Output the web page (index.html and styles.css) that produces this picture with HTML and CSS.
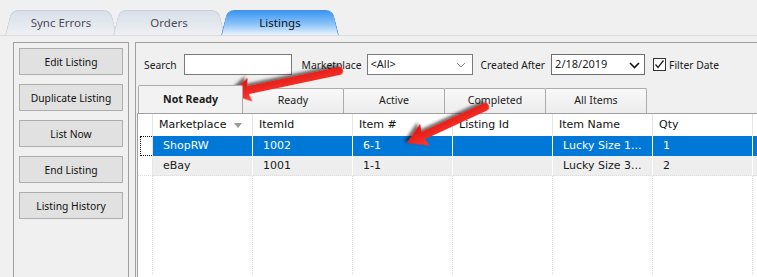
FILE: index.html
```html
<!DOCTYPE html>
<html lang="en">
<head>
    <meta charset="UTF-8">
    <title>Listings</title>
    <link rel="stylesheet" href="styles.css">
</head>
<body>
    <!-- Top tabs -->
    <div class="top-tabs">
        <div class="ttab">Sync Errors</div>
        <div class="ttab">Orders</div>
        <div class="ttab active">Listings</div>
    </div>

    <div class="content">
        <!-- Left actions -->
        <div class="side">
            <button class="btn">Edit Listing</button>
            <button class="btn">Duplicate Listing</button>
            <button class="btn">List Now</button>
            <button class="btn">End Listing</button>
            <button class="btn">Listing History</button>
        </div>

        <!-- Main area -->
        <div class="main">
            <div class="filters">
                <span class="lbl">Search</span>
                <span class="box search"></span>
                <span class="lbl mk">Marketplace</span>
                <span class="box select">&lt;All&gt;
                    <svg class="chev" width="10" height="6" viewBox="0 0 10 6"><path d="M1 1 L5 5 L9 1" fill="none" stroke="#8a8a8a" stroke-width="1"/></svg>
                </span>
                <span class="lbl ca">Created After</span>
                <span class="box date">2/18/2019
                    <svg class="chev" width="11" height="7" viewBox="0 0 11 7"><path d="M1 1 L5.5 5.5 L10 1" fill="none" stroke="#111" stroke-width="1.6"/></svg>
                </span>
                <span class="check">
                    <svg width="13" height="13" viewBox="0 0 13 13"><rect x="0.5" y="0.5" width="12" height="12" fill="#fff" stroke="#333"/><path d="M2.5 6.5 L5 9.5 L10.5 2.5" fill="none" stroke="#222" stroke-width="1.3"/></svg>
                </span>
                <span class="lbl fd">Filter Date</span>
            </div>

            <div class="sub-tabs">
                <div class="stab sel">Not Ready</div>
                <div class="stab">Ready</div>
                <div class="stab">Active</div>
                <div class="stab">Completed</div>
                <div class="stab">All Items</div>
            </div>

            <div class="grid">
                <div class="row head">
                    <div class="cell rh"></div>
                    <div class="cell">Marketplace <span class="sort"></span></div>
                    <div class="cell">ItemId</div>
                    <div class="cell">Item #</div>
                    <div class="cell">Listing Id</div>
                    <div class="cell">Item Name</div>
                    <div class="cell">Qty</div>
                    <div class="cell"></div>
                </div>
                <div class="row selected">
                    <div class="cell rh"><span class="focus"></span></div>
                    <div class="cell">ShopRW</div>
                    <div class="cell">1002</div>
                    <div class="cell">6-1</div>
                    <div class="cell"></div>
                    <div class="cell">Lucky Size 1...</div>
                    <div class="cell">1</div>
                    <div class="cell"></div>
                </div>
                <div class="row alt">
                    <div class="cell rh"></div>
                    <div class="cell">eBay</div>
                    <div class="cell">1001</div>
                    <div class="cell">1-1</div>
                    <div class="cell"></div>
                    <div class="cell">Lucky Size 3...</div>
                    <div class="cell">2</div>
                    <div class="cell"></div>
                </div>
                <div class="row filler">
                    <div class="cell rh"></div>
                    <div class="cell"></div>
                    <div class="cell"></div>
                    <div class="cell"></div>
                    <div class="cell"></div>
                    <div class="cell"></div>
                    <div class="cell"></div>
                    <div class="cell"></div>
                </div>
            </div>
        </div>
    </div>

    <!-- Red annotation arrows -->
    <svg class="arrows" width="757" height="277" viewBox="0 0 757 277">
        <defs>
            <filter id="shade" x="-20%" y="-50%" width="140%" height="200%">
                <feDropShadow dx="2" dy="2.5" stdDeviation="1.7" flood-color="#000" flood-opacity="0.6"/>
            </filter>
            <linearGradient id="red" x1="0" y1="0" x2="0" y2="1">
                <stop offset="0" stop-color="#ff3b2f"/>
                <stop offset="1" stop-color="#d9120f"/>
            </linearGradient>
        </defs>
        <g transform="translate(339 71) rotate(168.1)" filter="url(#shade)">
            <path d="M0 -4 L93 -4 L91 -12 L111 0 L91 12 L93 4 L0 4 A4 4 0 0 1 0 -4 Z" fill="url(#red)"/>
        </g>
        <g transform="translate(485 107) rotate(155.2)" filter="url(#shade)">
            <path d="M0 -4 L68 -4 L66 -12 L86 0 L66 12 L68 4 L0 4 A4 4 0 0 1 0 -4 Z" fill="url(#red)"/>
        </g>
    </svg>
</body>
</html>
```

FILE: styles.css
```css
body {
    margin: 0;
    width: 757px;
    height: 277px;
    overflow: hidden;
    position: relative;
    background-color: #f0f0f0;
    font-family: "Noto Sans", "Open Sans", sans-serif;
    color: #1a1a1a;
}

/* top tabs */
.top-tabs {
    height: 35px;
    border-bottom: 1px solid #dcdcdc;
    display: flex;
    align-items: flex-end;
    padding-left: 5px;
}
.ttab {
    position: relative;
    width: 112px;
    height: 25px;
    line-height: 25px;
    text-align: center;
    font-size: 11.5px;
    color: #4f4a57;
    z-index: 1;
}
.ttab + .ttab {
    margin-left: -4px;
}
.ttab::before, .ttab::after {
    content: '';
    position: absolute;
    top: 0;
    bottom: 0;
    width: 60%;
    z-index: -1;
    border: 1px solid #c9d0d8;
    border-bottom: none;
    background: linear-gradient(#d8e0ea, #eef0f3);
    transform-origin: bottom;
}
.ttab::before {
    left: 0;
    border-right: none;
    border-radius: 7px 0 0 0;
    transform: skewX(-14deg);
}
.ttab::after {
    right: 0;
    border-left: none;
    border-radius: 0 7px 0 0;
    transform: skewX(14deg);
}
.ttab.active {
    width: 118px;
    color: #111;
    z-index: 2;
}
.ttab.active::before, .ttab.active::after {
    border-color: #4f8fd6;
    background: linear-gradient(#3897f5, #8cc2f8 55%, #e9f3fd);
}

/* layout */
.content {
    display: flex;
    padding-top: 6px;
    height: 235px;
}
.side {
    margin-left: 13px;
    width: 104px;
    border: 1px solid #a0a0a0;
    border-bottom: none;
    padding: 5px;
    display: flex;
    flex-direction: column;
    gap: 9px;
}
.btn {
    height: 27px;
    width: 104px;
    background-color: #e1e1e1;
    border: 1px solid #adadad;
    font-family: "Noto Sans", "Open Sans", sans-serif;
    font-size: 10.3px;
    color: #111;
    padding: 0;
}
.main {
    margin-left: 6px;
    flex: 1;
    border-left: 1px solid #a0a0a0;
    border-top: 1px solid #a0a0a0;
    overflow: hidden;
}

/* filters */
.filters {
    display: flex;
    align-items: center;
    height: 21px;
    margin-top: 11px;
    padding-left: 8px;
    font-size: 10.3px;
    white-space: nowrap;
}
.box {
    box-sizing: border-box;
    height: 21px;
    border: 1px solid #7a7a7a;
    background: #fff;
    position: relative;
    font-size: 11px;
    line-height: 18px;
    padding-left: 3px;
}
.search {
    width: 108px;
    margin-left: 7px;
}
.mk {
    margin-left: 10px;
}
.select {
    width: 106px;
    margin-left: 5px;
}
.ca {
    margin-left: 8px;
}
.date {
    width: 94px;
    margin-left: 6px;
    border-color: #6d6d6d;
}
.chev {
    position: absolute;
    top: 7px;
    right: 6px;
}
.date .chev {
    right: 4px;
}
.check {
    margin-left: 8px;
    display: flex;
}
.fd {
    margin-left: 3px;
}

/* sub tabs */
.sub-tabs {
    display: flex;
    align-items: flex-end;
    height: 28px;
    margin-top: 10px;
    padding-left: 2px;
}
.stab {
    box-sizing: border-box;
    width: 102px;
    height: 25px;
    line-height: 23px;
    text-align: center;
    font-size: 10.6px;
    border: 1px solid #acacac;
    border-bottom: none;
    border-radius: 2px 2px 0 0;
    background: linear-gradient(#f8f8f8, #ececec);
    margin-left: -1px;
}
.stab.sel {
    width: 105px;
    height: 28px;
    line-height: 26px;
    margin-left: 0;
    font-weight: bold;
    background: #f2f2f2;
    position: relative;
    z-index: 1;
}

/* data grid */
.grid {
    margin-left: 1px;
    border-left: 1px solid #a0a0a0;
    border-top: 1px solid #a0a0a0;
    background: #fff;
    height: 163px;
    font-family: "DejaVu Sans", Verdana, sans-serif;
    font-size: 11px;
}
.row {
    display: grid;
    grid-template-columns: 15px repeat(7, 100px);
    height: 20px;
    line-height: 20px;
}
.row.head {
    height: 22px;
    line-height: 22px;
}
.cell {
    box-sizing: border-box;
    border-right: 1px solid #e6e6e6;
    padding-left: 10px;
    white-space: nowrap;
    overflow: hidden;
    position: relative;
}
.head .cell {
    padding-left: 6px;
    color: #111;
}
.cell.rh {
    padding-left: 0;
    background: #fff;
}
.sort {
    position: absolute;
    left: 81px;
    top: 9px;
    border-top: 5px solid #9a9a9a;
    border-left: 4px solid transparent;
    border-right: 4px solid transparent;
}
.selected .cell {
    background: #0078d7;
    color: #fff;
    border-right-color: #fff;
}
.selected .cell.rh {
    background: #fff;
    border-right-color: #e6e6e6;
}
.focus {
    position: absolute;
    left: 2px;
    top: 0;
    right: 0;
    bottom: 0;
    border: 1px dotted #111;
    border-right: none;
}
.alt .cell {
    background: #eeeeee;
    border-right-color: #fff;
    border-bottom: 1px dotted #dcdcdc;
}
.alt .cell.rh {
    background: #fff;
    border-right-color: #e6e6e6;
}
.filler {
    height: 99px;
}
.filler .cell {
    border-right: 1px dotted #dcdcdc;
}

/* annotation overlay */
.arrows {
    position: absolute;
    left: 0;
    top: 0;
    pointer-events: none;
}
```
